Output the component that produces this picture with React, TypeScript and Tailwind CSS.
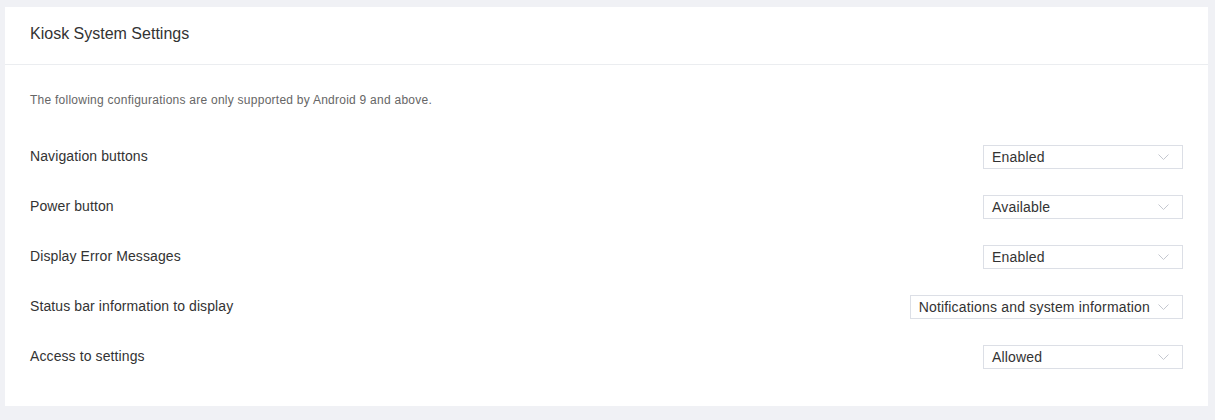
const ROWS = [
  { label: 'Navigation buttons', value: 'Enabled', wide: false },
  { label: 'Power button', value: 'Available', wide: false },
  { label: 'Display Error Messages', value: 'Enabled', wide: false },
  { label: 'Status bar information to display', value: 'Notifications and system information', wide: true },
  { label: 'Access to settings', value: 'Allowed', wide: false },
];

const Chevron = () => (
  <svg width="11" height="6" viewBox="0 0 11 6" fill="none" className="flex-shrink-0">
    <path d="M0.5 0.5L5.5 5.5L10.5 0.5" stroke="#c4c7cf" strokeWidth="1" />
  </svg>
);

function Select({ value, wide }: { value: string; wide: boolean }) {
  return (
    <div
      className={`h-[24px] flex items-center justify-between gap-2 pl-[8px] pr-[13px] border border-[#dcdfe6] bg-white text-[14px] text-[#333] tracking-[0.18px] ${
        wide ? '' : 'w-[200px]'
      }`}
    >
      <span className="whitespace-nowrap">{value}</span>
      <Chevron />
    </div>
  );
}

export default function App() {
  return (
    <div
      className="min-h-[420px] bg-[#f0f1f5] pt-[7px] pl-[5px] pr-[7px]"
      style={{ fontFamily: '"Liberation Sans", Arial, sans-serif' }}
    >
      <div className="bg-white">
        {/* Header */}
        <div className="h-[58px] flex items-center px-[25px] border-b border-[#ebedf0]">
          <h1 className="text-[16px] text-[#333] -mt-[3px]">Kiosk System Settings</h1>
        </div>

        {/* Body */}
        <div className="px-[25px] pt-[26px] pb-[24px]">
          <p className="text-[12px] leading-[18px] text-[#666] tracking-[0.25px] mb-[23px]">
            The following configurations are only supported by Android 9 and above.
          </p>
          {ROWS.map((row) => (
            <div key={row.label} className="h-[50px] flex items-center justify-between">
              <span className="text-[14px] text-[#333] tracking-[0.1px] -mt-[2px]">{row.label}</span>
              <Select value={row.value} wide={row.wide} />
            </div>
          ))}
        </div>
      </div>
    </div>
  );
}
